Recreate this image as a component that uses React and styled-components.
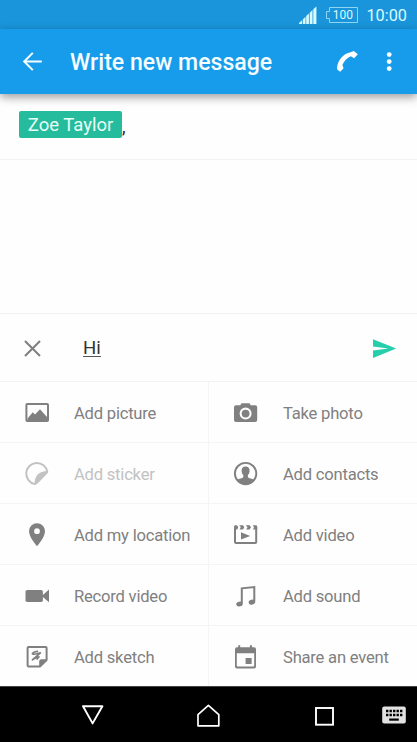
import styled, { createGlobalStyle } from "styled-components";

const GlobalStyle = createGlobalStyle`
  body {
    margin: 0;
    background: #fff;
    font-family: Roboto, "Liberation Sans", sans-serif;
  }
`;

const Phone = styled.div`
  display: flex;
  flex-direction: column;
  width: 417px;
  height: 742px;
  overflow: hidden;
  background: #fefefe;
`;

const StatusBar = styled.div`
  display: flex;
  align-items: center;
  justify-content: flex-end;
  box-sizing: border-box;
  height: 29px;
  padding-right: 10px;
  background: #1a95db;
  color: #d9fbff;
`;

const Clock = styled.span`
  margin-left: 8px;
  font-size: 16.3px;
  line-height: 29px;
  padding-top: 1px;
`;

const Battery = styled.div`
  display: grid;
  place-items: center;
  position: relative;
  width: 32px;
  height: 16px;
  margin-left: 9px;

  span {
    padding-left: 1px;
    font-size: 12px;
    line-height: 16px;
  }

  svg {
    position: absolute;
    inset: 0;
  }
`;

const AppBar = styled.header`
  display: flex;
  align-items: center;
  box-sizing: border-box;
  height: 65px;
  padding: 0 15px 0 21px;
  background: #179ceb;
  box-shadow: 0 3px 9px rgba(0, 0, 0, 0.4);
  z-index: 1;
`;

const Title = styled.h1`
  flex: 1;
  margin: 0 0 0 25px;
  padding-top: 2px;
  color: #f4fdff;
  font-size: 23.1px;
  font-weight: 500;
  line-height: 28px;
`;

const Recipients = styled.div`
  display: flex;
  align-items: flex-start;
  box-sizing: border-box;
  height: 66px;
  padding: 17px 19px 0;
  border-bottom: 1px solid #f2f2f2;
  color: #222;
  font-size: 18px;
  line-height: 27px;
`;

const Chip = styled.span`
  box-sizing: border-box;
  width: 103px;
  height: 27px;
  border-radius: 2px;
  background: #24bc9c;
  color: #e8fff9;
  font-size: 18.5px;
  line-height: 28px;
  text-align: center;
`;

const Comma = styled.span`
  padding-top: 2px;
`;

const Conversation = styled.main`
  flex: 1;
`;

const Compose = styled.div`
  display: flex;
  align-items: center;
  box-sizing: border-box;
  height: 69px;
  padding: 0 20px 0 21px;
  border-top: 1px solid #f2f2f2;
  border-bottom: 1px solid #f2f2f2;
`;

const Draft = styled.div`
  flex: 1;
  margin-left: 38px;
  color: #333;
  font-size: 18.6px;
  line-height: 24px;

  span {
    border-bottom: 1px solid #555;
    display: inline-block;
    height: 20px;
    line-height: 24px;
    vertical-align: top;
  }
`;

const Attachments = styled.div`
  display: grid;
  grid-template-columns: 208px 209px;
  grid-template-rows: repeat(4, 61px) 60px;
`;

const Attachment = styled.div`
  display: flex;
  align-items: center;
  gap: 25px;
  box-sizing: border-box;
  height: 61px;
  padding-left: 25px;
  border-bottom: 1px solid #f4f4f4;
  color: ${({ $disabled }) => ($disabled ? "#c2c2c2" : "#808080")};
  font-size: 16.6px;
  letter-spacing: -0.22px;
  line-height: 24px;
  white-space: nowrap;

  &:nth-child(even) {
    border-left: 1px solid #f4f4f4;
  }

  &:nth-last-child(-n + 2) {
    height: 60px;
    border-bottom: 0;
  }
`;

const Label = styled.span`
  padding-top: 4px;
`;

const NavBar = styled.nav`
  display: flex;
  align-items: center;
  box-sizing: border-box;
  height: 56px;
  padding-left: 80px;
  border-top: 1px solid #444;
  background: #000;
`;

const Icon = styled.svg`
  display: block;
  flex: none;
  overflow: visible;
  margin-left: ${({ $left }) => $left || 0}px;
`;

function Glyph({ size = 24, left, children, ...rest }) {
  return (
    <Icon width={size} height={size} viewBox={`0 0 ${size} ${size}`} $left={left} fill="currentColor" {...rest}>
      {children}
    </Icon>
  );
}

const PictureIcon = (
  <Glyph>
    <rect x="1.4" y="4.1" width="21.6" height="16.9" rx="0.8" fill="none" stroke="currentColor" strokeWidth="2" />
    <path d="M2.5 18.5 7.8 12.2 10 14.5 15 9.2 22 17V21H2.5Z" />
  </Glyph>
);

const CameraIcon = (
  <Glyph>
    <path
      fillRule="evenodd"
      d="M7.8 3.2H15.2Q16 3.2 16.6 5.3H21.2Q23.2 5.3 23.2 7.3V20Q23.2 22 21.2 22H2Q0 22 0 20V7.3Q0 5.3 2 5.3H6.4Q7 3.2 7.8 3.2ZM11.6 7.6A6 6 0 1 0 11.6 19.6A6 6 0 1 0 11.6 7.6Z"
    />
    <circle cx="11.6" cy="13.6" r="3.9" />
  </Glyph>
);

const StickerIcon = (
  <Glyph>
    <path
      d="M22.3 10.8A10.6 10.6 0 1 0 9.8 23Q11.2 23 22.3 10.8Z"
      fill="none"
      stroke="currentColor"
      strokeWidth="2"
      strokeLinejoin="round"
    />
    <path d="M9.5 23.5Q9.5 10.4 22.5 10L22.3 12.3 11.3 23.3Z" />
  </Glyph>
);

const ContactIcon = (
  <Glyph>
    <circle cx="11.6" cy="12.6" r="10.7" fill="none" stroke="currentColor" strokeWidth="1.9" />
    <path d="M11.6 5.4C14.4 5.4 15.8 7.2 15.6 10 15.5 12 14.8 13 13.9 14V16.3C15 17.3 18 17.6 20 18.8 18 22 15 23.5 11.6 23.5S5.2 22 3.2 18.8C5.2 17.6 8.2 17.3 9.3 16.3V14C8.4 13 7.7 12 7.6 10 7.4 7.2 8.8 5.4 11.6 5.4Z" />
  </Glyph>
);

const PinIcon = (
  <Glyph>
    <path
      fillRule="evenodd"
      d="M12 1.2A8 8 0 0 0 4 9.2C4 15.2 12 24.2 12 24.2S20 15.2 20 9.2A8 8 0 0 0 12 1.2ZM12 6.3A2.9 2.9 0 1 1 12 12.1A2.9 2.9 0 1 1 12 6.3Z"
    />
  </Glyph>
);

const ClipIcon = (
  <Glyph>
    <path d="M1 5V20Q1 21.1 2 21.1H21.2Q22.2 21.1 22.2 20V5" fill="none" stroke="currentColor" strokeWidth="2" />
    <path d="M0 4.7Q0 3.3 1.5 3.3H3L4.3 5.2 3.3 7.4H0ZM5.2 3.3H9L10.3 5.3 9 7.4H5.5L6.8 5.3ZM11.7 3.3H15.7L17 5.3 15.7 7.4H12.2L13.5 5.3ZM18.7 3.3H21.7Q23.2 3.3 23.2 4.7V7.4H19L20 5.3ZM7 10.2 16.2 13.9 7 17.4Z" />
  </Glyph>
);

const RecordIcon = (
  <Glyph>
    <rect x="0.5" y="7" width="17.4" height="12" rx="1.8" />
    <path d="M17.3 12.4 24 6.4V19.3L17.3 13.6Z" />
  </Glyph>
);

const SoundIcon = (
  <Glyph>
    <path d="M7.8 20.4V5.3L20.3 4V18.6" fill="none" stroke="currentColor" strokeWidth="2" />
    <ellipse cx="5.5" cy="21" rx="3.3" ry="2.4" transform="rotate(-15 5.5 21)" />
    <ellipse cx="17.9" cy="19.1" rx="3.3" ry="2.4" transform="rotate(-15 17.9 19.1)" />
  </Glyph>
);

const SketchIcon = (
  <Glyph>
    <path
      d="M3.4 3.1H20.8Q21.6 3.1 21.6 3.9V16L15.2 22.4H3.4Q2.6 22.4 2.6 21.6V3.9Q2.6 3.1 3.4 3.1Z"
      fill="none"
      stroke="currentColor"
      strokeWidth="2"
      strokeLinejoin="round"
    />
    <path d="M14.2 22.8V17.2Q14.2 15.2 16.2 15.2H22L21.8 16.4 15.4 22.8Z" />
    <path
      d="M12.4 7.3Q7.8 8 7.4 9.8 9.5 11 15.4 8.8L7.4 15.8Q11 13 14 12.8L12.2 15"
      fill="none"
      stroke="currentColor"
      strokeWidth="1.7"
      strokeLinecap="round"
      strokeLinejoin="round"
    />
  </Glyph>
);

const EventIcon = (
  <Glyph>
    <path
      fillRule="evenodd"
      d="M4.2 1.2H6.2V3.3H15.9V1.2H18V3.3H20Q22 3.3 22 5.3V22.4Q22 24.4 20 24.4H3Q1 24.4 1 22.4V5.3Q1 3.3 3 3.3H4.2ZM2.8 9.2V21.6Q2.8 22.6 3.8 22.6H19.2Q20.2 22.6 20.2 21.6V9.2Z"
    />
    <rect x="11.6" y="14" width="6" height="6" />
  </Glyph>
);

const attachments = [
  { label: "Add picture", icon: PictureIcon },
  { label: "Take photo", icon: CameraIcon },
  { label: "Add sticker", icon: StickerIcon, disabled: true },
  { label: "Add contacts", icon: ContactIcon },
  { label: "Add my location", icon: PinIcon },
  { label: "Add video", icon: ClipIcon },
  { label: "Record video", icon: RecordIcon },
  { label: "Add sound", icon: SoundIcon },
  { label: "Add sketch", icon: SketchIcon },
  { label: "Share an event", icon: EventIcon },
];

export default function App() {
  return (
    <Phone>
      <GlobalStyle />
      <StatusBar>
        <Icon width="18" height="18" viewBox="0 0 18 18" fill="currentColor">
          <path d="M0 18V17L3 14.2V18ZM3.8 18V13.4L6.5 10.8V18ZM7.2 18V10.1L9.9 7.5V18ZM10.7 18V6.8L13.5 4V18ZM14.3 18V3.3L17.4 0.4V18Z" />
        </Icon>
        <Battery>
          <svg width="32" height="16" viewBox="0 0 32 16" fill="none" stroke="#8fd6f5">
            <path d="M3.5 0.5H31.5V15.5H3.5V11.5H0.5V4.5H3.5Z" />
          </svg>
          <span>100</span>
        </Battery>
        <Clock>10:00</Clock>
      </StatusBar>
      <AppBar>
        <Glyph color="#f4fdff">
          <path d="M20.8 11.5H3.4M11.8 2.9 3.2 11.5 11.8 20.1" fill="none" stroke="currentColor" strokeWidth="2" />
        </Glyph>
        <Title>Write new message</Title>
        <Glyph color="#fff">
          <path d="M1 17.4C2 10 7.4 3.4 14.6 2.2L17.8 1 21.8 4.2 18.2 8.2 14.8 6.2C11 7.8 8 11 6.4 15L7.6 18.2 4.2 21.8 1.4 19.8Z" />
        </Glyph>
        <Glyph color="#fff" left={18}>
          <circle cx="11.2" cy="4.6" r="2.4" />
          <circle cx="11.2" cy="11.6" r="2.4" />
          <circle cx="11.2" cy="18.6" r="2.4" />
        </Glyph>
      </AppBar>
      <Recipients>
        <Chip>Zoe Taylor</Chip>
        <Comma>,</Comma>
      </Recipients>
      <Conversation />
      <Compose>
        <Glyph color="#808080">
          <path d="M4 5 19 20M19 5 4 20" fill="none" stroke="currentColor" strokeWidth="2.1" />
        </Glyph>
        <Draft>
          <span>Hi</span>
        </Draft>
        <Glyph color="#26ceac">
          <path d="M0 3.2 23.2 12.6 0 22V14.6L15.4 12.6 0 10.6Z" />
        </Glyph>
      </Compose>
      <Attachments>
        {attachments.map(({ label, icon, disabled }) => (
          <Attachment key={label} $disabled={disabled}>
            {icon}
            <Label>{label}</Label>
          </Attachment>
        ))}
      </Attachments>
      <NavBar>
        <Glyph color="#fff">
          <path d="M3 3.2H22.4L12.6 20.4Z" fill="none" stroke="currentColor" strokeWidth="1.9" strokeLinejoin="round" />
        </Glyph>
        <Glyph color="#fff" left={92}>
          <path
            d="M2 22.8V11.6L12.4 2.4 22.8 11.6V22.8Z"
            fill="none"
            stroke="currentColor"
            strokeWidth="1.7"
            strokeLinejoin="round"
          />
        </Glyph>
        <Glyph color="#fff" left={92}>
          <rect x="4" y="5" width="17" height="16.7" fill="none" stroke="currentColor" strokeWidth="1.9" />
        </Glyph>
        <Glyph color="#e2e2e2" left={46}>
          <rect x="0.2" y="3.4" width="23.6" height="17" rx="2" />
          <path
            d="M4 8H20.5M4 12H20.5"
            stroke="#000"
            strokeWidth="2.4"
            strokeDasharray="2.4 1.1"
          />
          <rect x="7.2" y="15.5" width="9.6" height="2.2" fill="#000" />
        </Glyph>
      </NavBar>
    </Phone>
  );
}
